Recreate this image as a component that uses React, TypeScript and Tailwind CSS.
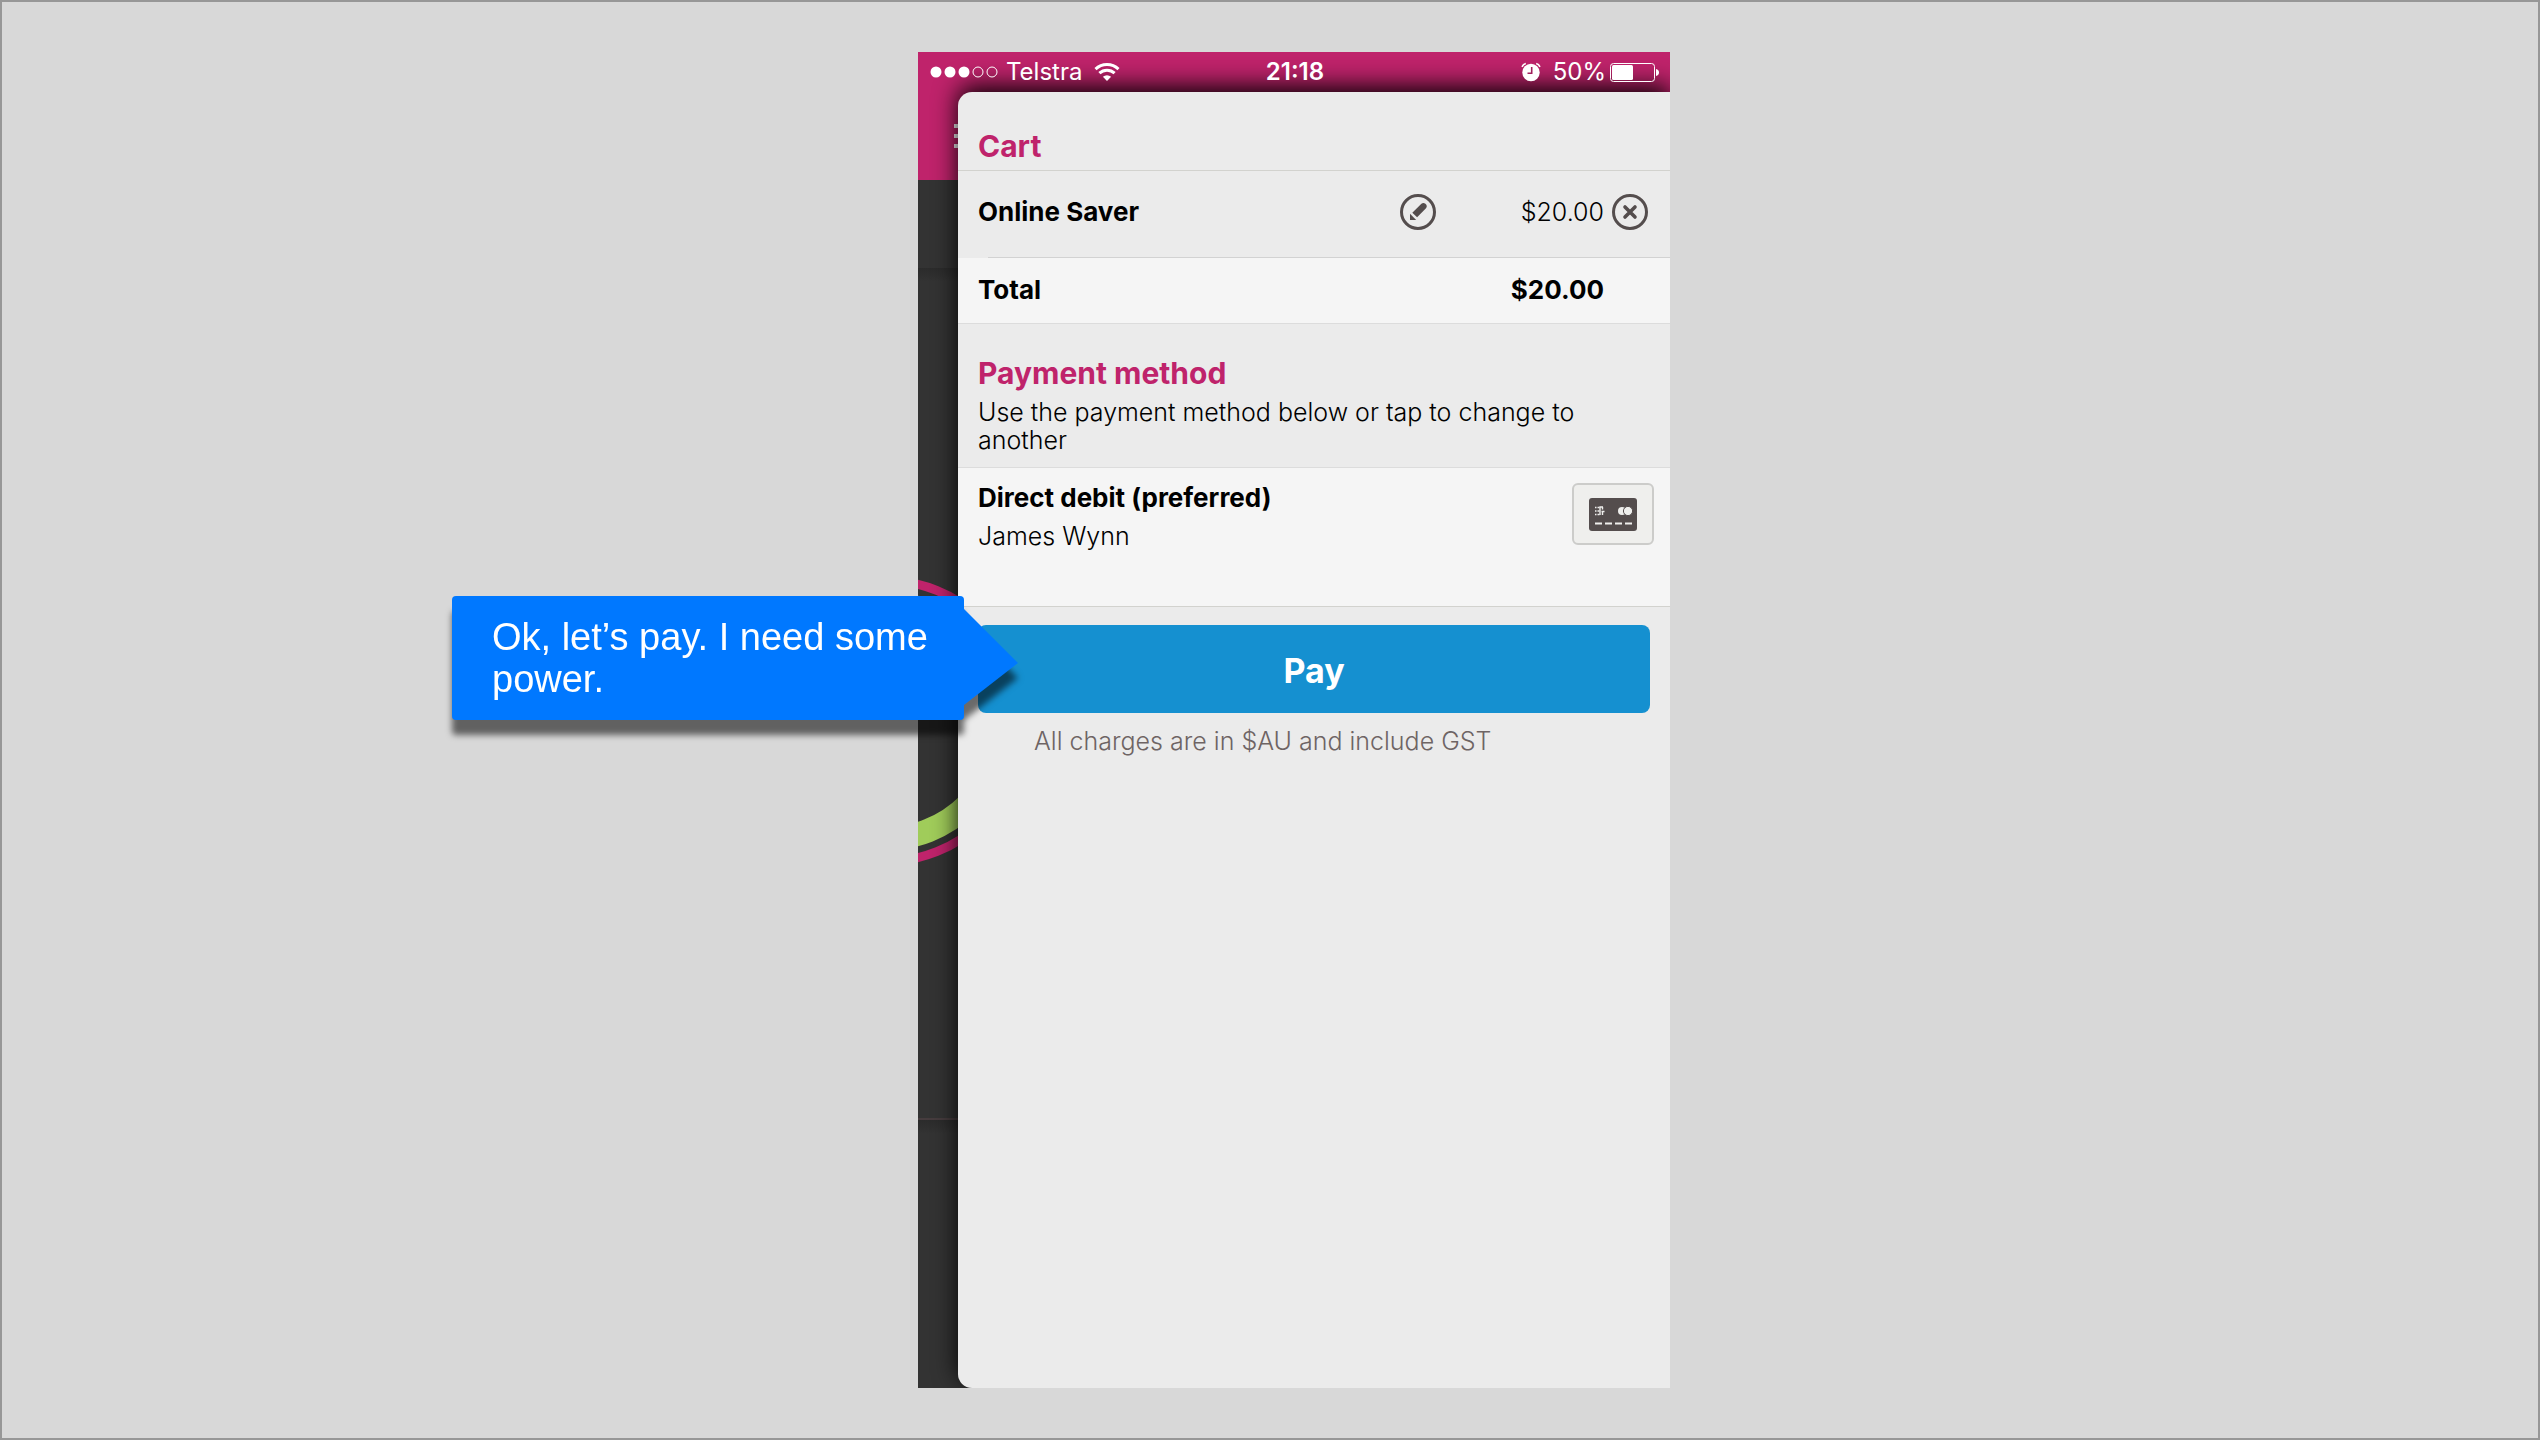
import type { ReactNode } from 'react';

function SignalDots() {
  return (
    <svg width="68" height="12" viewBox="0 0 68 12" fill="none" aria-hidden="true">
      <circle cx="6" cy="6" r="5.5" fill="#fff" />
      <circle cx="20" cy="6" r="5.5" fill="#fff" />
      <circle cx="34" cy="6" r="5.5" fill="#fff" />
      <circle cx="48" cy="6" r="5" stroke="#fff" />
      <circle cx="62" cy="6" r="5" stroke="#fff" />
    </svg>
  );
}

function WifiIcon() {
  return (
    <svg width="26" height="18" viewBox="0 0 26 18" fill="none" aria-hidden="true">
      <path d="M1.5 6.2a16.5 16.5 0 0 1 23 0" stroke="#fff" strokeWidth="3" />
      <path d="M5.4 10.2a11 11 0 0 1 15.2 0" stroke="#fff" strokeWidth="3" />
      <path d="M8.9 13.8a6 6 0 0 1 8.2 0L13 18z" fill="#fff" />
    </svg>
  );
}

function AlarmIcon() {
  return (
    <svg width="20" height="20" viewBox="0 0 20 20" fill="none" aria-hidden="true">
      <circle cx="10" cy="10.500" r="8.7" fill="#fff" />
      <path d="M10.7 5v6.200H6.5" stroke="#a0205c" strokeWidth="1.6" />
      <path d="M1 4.8A6 6 0 0 1 4.8 1.6M19 4.8a6 6 0 0 0-3.8-3.2" stroke="#fff" strokeWidth="1.6" />
    </svg>
  );
}

function BatteryIcon() {
  return (
    <svg width="50" height="19" viewBox="0 0 50 19" fill="none" aria-hidden="true">
      <rect x="0.5" y="0.5" width="44" height="18" rx="3" stroke="#fff" />
      <rect x="2" y="2" width="21" height="15" rx="1.5" fill="#fff" />
      <path d="M46 6c2 .3 3 1.6 3 3.5s-1 3.2-3 3.5z" fill="#fff" />
    </svg>
  );
}

function PencilIcon() {
  return (
    <svg width="36" height="36" viewBox="0 0 36 36" fill="none" aria-hidden="true">
      <circle cx="18" cy="18" r="16.5" stroke="#544d4d" strokeWidth="3" />
      <path d="M12.3 18.7 21.4 9.8c1.2-1.2 2.7-1.2 4 0 1.6 1.5 1.9 3 .6 4.4l-8.9 9.1z" fill="#544d4d" />
      <path d="M10 19.8 16.2 26H10z" fill="#544d4d" />
    </svg>
  );
}

function RemoveIcon() {
  return (
    <svg width="36" height="36" viewBox="0 0 36 36" fill="none" aria-hidden="true">
      <circle cx="18" cy="18" r="16.5" stroke="#544d4d" strokeWidth="3" />
      <path d="m13 13 10 10M23 13 13 23" stroke="#544d4d" strokeWidth="3.6" strokeLinecap="round" />
    </svg>
  );
}

function CardIcon() {
  return (
    <svg width="48" height="33" viewBox="0 0 48 33" fill="none" aria-hidden="true">
      <rect width="48" height="33" rx="3" fill="#544d4d" />
      <path d="M6 9.500h1.500M6 13h1.500M6 16.500h1.500M8.500 9.500h2M8.500 13h2M8.500 16.500h2" stroke="#efefed" strokeWidth="1.6" />
      <path d="M11 8.500v8.500M10.500 9h3.500M13.500 9v2.500M12.500 13.500h3M13.500 14v3" stroke="#efefed" strokeWidth="1.4" />
      <circle cx="33" cy="13" r="4" fill="#efefed" />
      <circle cx="39" cy="13" r="4.6" fill="#efefed" stroke="#544d4d" />
      <path d="M6 25.5h7M16 25.5h7M26 25.5h7M36 25.5h7" stroke="#efefed" strokeWidth="2" />
    </svg>
  );
}

function StatusBar() {
  return (
    <div className="relative z-10 h-10 grid grid-cols-3 items-center pl-3 pr-[10px] text-white font-['Inter',sans-serif] text-[24px] leading-10">
      <div className="flex items-center gap-2">
        <SignalDots />
        <span className="pr-1">Telstra</span>
        <WifiIcon />
      </div>
      <div className="text-center font-semibold">21:18</div>
      <div className="flex items-center justify-end gap-1">
        <AlarmIcon />
        <span className="pl-2">50%</span>
        <BatteryIcon />
      </div>
    </div>
  );
}

// dashboard left showing at the edge of the open drawer
function Dashboard() {
  return (
    <div className="absolute inset-0 flex flex-col">
      <div className="h-32 shrink-0 bg-[#bf236b] pt-[72px] pl-9">
        <div className="w-9 h-6 flex flex-col justify-between">
          <div className="h-1 bg-white" />
          <div className="h-1 bg-white" />
          <div className="h-1 bg-white" />
        </div>
      </div>
      <div className="h-[88px] shrink-0 bg-[#333]" />
      <div className="flex-1 bg-linear-to-b from-[#2b2b2b] to-[#333] to-[14px] pt-[308px]">
        <svg width="290" height="290" viewBox="0 0 290 290" fill="none" className="-ml-[178px]" aria-hidden="true">
          <circle cx="145" cy="145" r="140.5" stroke="#bf236b" strokeWidth="9" />
          <circle cx="145" cy="145" r="117.8" stroke="#a0cc5a" strokeWidth="23.5" />
        </svg>
      </div>
      <div className="h-[270px] shrink-0 border-t-2 border-[#463c3e] bg-linear-to-b from-[#2b2b2b] to-[#333] to-[14px]" />
    </div>
  );
}

function SectionTitle({ children }: { children: ReactNode }) {
  return <h2 className="text-[30px] leading-9 font-bold text-[#bf236b]">{children}</h2>;
}

function CartDrawer() {
  return (
    <div className="relative ml-10 flex-1 rounded-l-[14px] bg-[#ebebeb] shadow-[0_-6px_24px_rgba(0,0,0,0.95)] font-['Inter',sans-serif] text-[25px] leading-7 text-black">
      <section>
        <div className="h-[79px] border-b border-[#d2d2ce] pt-9 pl-5">
          <SectionTitle>Cart</SectionTitle>
        </div>
        <div className="h-[86px] flex items-center pb-1 pl-5 pr-[22px]">
          <span className="flex-1 text-[26px] font-bold">Online Saver</span>
          <button type="button" aria-label="Edit" className="w-9">
            <PencilIcon />
          </button>
          <span className="w-[168px] text-right font-light">$20.00</span>
          <button type="button" aria-label="Remove" className="ml-2">
            <RemoveIcon />
          </button>
        </div>
        <div className="ml-[30px] border-t border-[#d2d2d2]" />
        <div className="h-[66px] border-b border-[#dcdcdc] flex items-center justify-between bg-[#f5f5f5] pb-[2px] pl-5 pr-[66px] text-[26px] font-bold">
          <span>Total</span>
          <span>$20.00</span>
        </div>
      </section>

      <section>
        <div className="h-36 border-b border-[#dcdcdc] pt-[31px] pl-5 pr-12">
          <SectionTitle>Payment method</SectionTitle>
          <p className="pt-[7px] font-light">Use the payment method below or tap to change to another</p>
        </div>
        <div className="h-[139px] border-b border-[#d2d2ce] flex items-start justify-between bg-[#f5f5f5] pt-[15px] pl-5 pr-4">
          <div>
            <div className="pt-px text-[26px] font-bold">Direct debit (preferred)</div>
            <div className="pt-[10px] font-light">James Wynn</div>
          </div>
          <button
            type="button"
            aria-label="Change payment method"
            className="w-[82px] h-[62px] flex items-center justify-center rounded-md border-2 border-[#ccccca] bg-[#efefed]"
          >
            <CardIcon />
          </button>
        </div>
      </section>

      <div className="pt-[18px] px-5">
        <button type="button" className="w-full h-[88px] rounded-lg bg-[#1590d0] pt-1 text-[34px] font-bold text-white">
          Pay
        </button>
        <p className="pt-[14px] pl-14 font-light text-[#6e6464]">All charges are in $AU and include GST</p>
      </div>
    </div>
  );
}

function Callout() {
  return (
    <div className="absolute top-[544px] right-[706px] w-[512px] drop-shadow-[0_15px_3px_rgba(0,0,0,0.55)]">
      <p className="min-h-[124px] rounded bg-[#0078ff] py-5 pl-10 pr-6 font-['Liberation_Sans',sans-serif] text-[38px] leading-[42px] text-white">
        Ok, let’s pay. I need some power.
      </p>
      <svg width="54" height="96" viewBox="0 0 54 96" className="absolute top-[13px] left-full" aria-hidden="true">
        <path d="M0 0 54 54 0 96z" fill="#0078ff" />
      </svg>
    </div>
  );
}

export default function App() {
  return (
    <main className="min-h-screen flex justify-center border-2 border-[#979797] bg-[#d8d8d8] py-[50px] pl-12">
      <div className="relative w-full max-w-[752px] flex">
        <div className="relative flex-1 flex flex-col overflow-hidden bg-[#333]">
          <Dashboard />
          <StatusBar />
          <CartDrawer />
        </div>
        <Callout />
      </div>
    </main>
  );
}
